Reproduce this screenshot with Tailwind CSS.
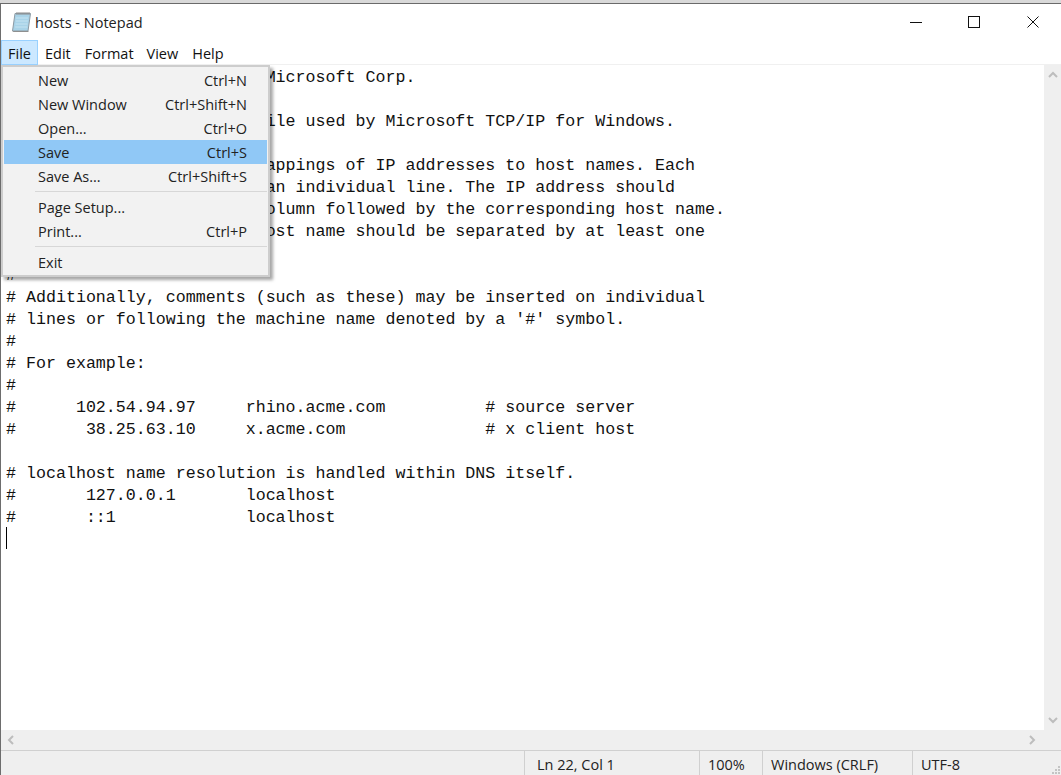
<!DOCTYPE html>
<html>
<head>
<meta charset="utf-8">
<script src="https://cdn.jsdelivr.net/npm/@tailwindcss/browser@4"></script>
<title>hosts - Notepad</title>
</head>
<body class="w-[1061px] h-[775px] overflow-hidden bg-white">
<div class="relative w-[1061px] h-[775px] flex flex-col overflow-hidden font-['Open_Sans','Noto_Sans',sans-serif] text-[14.500px] text-[#111]">
  <div class="h-[3px] bg-[#d9d9d9] shrink-0"></div>
  <div class="h-px bg-[#6a6a6a] shrink-0"></div>
  <div class="flex-1 min-h-0 flex flex-col border-l border-[#6d6d6d]">
    <!-- title bar -->
    <div class="h-[36px] shrink-0 flex items-center">
      <svg class="ml-[10px] w-[21px] h-[22px]" viewBox="0 0 21 22">
        <path d="M4 2.500 L19.500 2.500 L17 20 L1.500 20 Z" fill="#a9d3e8" stroke="#8d9aa3"/>
        <path d="M1.500 20 L17 20 L18 21 L2.500 21 Z" fill="#8f8f8f"/>
        <path d="M5 7h12M4.800 10h12M4.500 13h12M4.200 16h12" stroke="#c5e3f1"/>
        <path d="M6 1v3M8 1v3M10 1v3M12 1v3M14 1v3M16 1v3M18 1v3" stroke="#8b8b8b"/>
      </svg>
      <span class="ml-[3px] pt-[2px] text-[#222]">hosts - Notepad</span>
      <div class="ml-auto flex items-center">
        <svg class="w-[14px] h-[14px] mr-[44px]" viewBox="0 0 14 14"><path d="M1 7.500h12" stroke="#111"/></svg>
        <svg class="w-[14px] h-[14px] mr-[45px]" viewBox="0 0 14 14"><rect x="1.500" y="1.500" width="11" height="11" fill="none" stroke="#111"/></svg>
        <svg class="w-[14px] h-[14px] mr-[21px]" viewBox="0 0 14 14"><path d="M1.500 1.500l11 11M12.500 1.500l-11 11" stroke="#111"/></svg>
      </div>
    </div>
    <!-- menu bar -->
    <div class="h-[25px] shrink-0 flex items-center border-b border-[#f0f0f0]">
      <span class="h-[25px] w-[37px] pt-[3px] flex items-center justify-center bg-[#cce8ff] border border-[#99d1ff]">File</span>
      <span class="ml-[7px] pt-[4px]">Edit</span>
      <span class="ml-[14px] pt-[4px]">Format</span>
      <span class="ml-[13px] pt-[4px]">View</span>
      <span class="ml-[14px] pt-[4px]">Help</span>
    </div>
    <!-- editor -->
    <div class="flex-1 min-h-0 flex">
      <pre class="flex-1 min-w-0 overflow-hidden pl-[5px] pt-[2px] font-['Liberation_Mono',monospace] text-[16.650px] leading-[22px] text-[#111]"># Copyright (c) 1993-2009 Microsoft Corp.
#
# This is a sample HOSTS file used by Microsoft TCP/IP for Windows.
#
# This file contains the mappings of IP addresses to host names. Each
# entry should be kept on an individual line. The IP address should
# be placed in the first column followed by the corresponding host name.
# The IP address and the host name should be separated by at least one
# space.
#
# Additionally, comments (such as these) may be inserted on individual
# lines or following the machine name denoted by a '#' symbol.
#
# For example:
#
#      102.54.94.97     rhino.acme.com          # source server
#       38.25.63.10     x.acme.com              # x client host

# localhost name resolution is handled within DNS itself.
#       127.0.0.1       localhost
#       ::1             localhost
<span class="inline-block w-px h-[22px] bg-black align-top -translate-y-[2px]"></span></pre>
      <div class="w-[17px] shrink-0 bg-[#efefef] flex flex-col items-center justify-between py-[6px]">
        <svg class="w-[10px] h-[7px]" viewBox="0 0 10 7"><path d="M1 6l4-4 4 4" fill="none" stroke="#bdbdbd" stroke-width="2"/></svg>
        <svg class="w-[10px] h-[7px]" viewBox="0 0 10 7"><path d="M1 1l4 4 4-4" fill="none" stroke="#bdbdbd" stroke-width="2"/></svg>
      </div>
    </div>
    <!-- horizontal scrollbar -->
    <div class="h-[20px] shrink-0 bg-[#efefef] flex items-center justify-between pl-[6px] pr-[25px]">
      <svg class="w-[7px] h-[10px]" viewBox="0 0 7 10"><path d="M6 1L2 5l4 4" fill="none" stroke="#bdbdbd" stroke-width="2"/></svg>
      <svg class="w-[7px] h-[10px]" viewBox="0 0 7 10"><path d="M1 1l4 4-4 4" fill="none" stroke="#bdbdbd" stroke-width="2"/></svg>
    </div>
    <!-- status bar -->
    <div class="relative h-[25px] shrink-0 bg-[#efefef] border-t border-[#d0d0d0] flex text-[#222]">
      <div class="w-[523px]"></div>
      <div class="w-[175px] border-l border-[#d0d0d0] pl-[12px] pt-[3px]">Ln 22, Col 1</div>
      <div class="w-[63px] border-l border-[#d0d0d0] pl-[8px] pt-[3px]">100%</div>
      <div class="w-[150px] border-l border-[#d0d0d0] pl-[8px] pt-[3px]">Windows (CRLF)</div>
      <div class="flex-1 border-l border-[#d0d0d0] pl-[8px] pt-[3px]">UTF-8</div>
      <svg class="absolute right-0 bottom-0 w-[11px] h-[11px]" viewBox="0 0 11 11"><path d="M8 2h2v2H8zM5 5h2v2H5zM8 5h2v2H8zM2 8h2v2H2zM5 8h2v2H5zM8 8h2v2H8z" fill="#c4c4c4"/></svg>
    </div>
  </div>
  <!-- file menu -->
  <div class="absolute left-px top-[65px] w-[269px] h-[212px] bg-[#f2f2f2] border-2 border-[#cdcdcd] shadow-[3px_3px_3px_rgba(0,0,0,0.35)] px-px pt-px text-[#222]">
    <div class="h-[24px] pt-[2px] flex items-center justify-between pl-[34px] pr-[20px]"><span>New</span><span>Ctrl+N</span></div>
    <div class="h-[24px] pt-[2px] flex items-center justify-between pl-[34px] pr-[20px]"><span>New Window</span><span>Ctrl+Shift+N</span></div>
    <div class="h-[24px] pt-[2px] flex items-center justify-between pl-[34px] pr-[20px]"><span>Open...</span><span>Ctrl+O</span></div>
    <div class="h-[24px] pt-[2px] flex items-center justify-between pl-[34px] pr-[20px] bg-[#90c8f6]"><span>Save</span><span>Ctrl+S</span></div>
    <div class="h-[24px] pt-[2px] flex items-center justify-between pl-[34px] pr-[20px]"><span>Save As...</span><span>Ctrl+Shift+S</span></div>
    <div class="h-px bg-[#d7d7d7] ml-[31px] my-[3px]"></div>
    <div class="h-[24px] pt-[2px] flex items-center justify-between pl-[34px] pr-[20px]"><span>Page Setup...</span></div>
    <div class="h-[24px] pt-[2px] flex items-center justify-between pl-[34px] pr-[20px]"><span>Print...</span><span>Ctrl+P</span></div>
    <div class="h-px bg-[#d7d7d7] ml-[31px] my-[3px]"></div>
    <div class="h-[24px] pt-[2px] flex items-center justify-between pl-[34px] pr-[20px]"><span>Exit</span></div>
  </div>
</div>
</body>
</html>
